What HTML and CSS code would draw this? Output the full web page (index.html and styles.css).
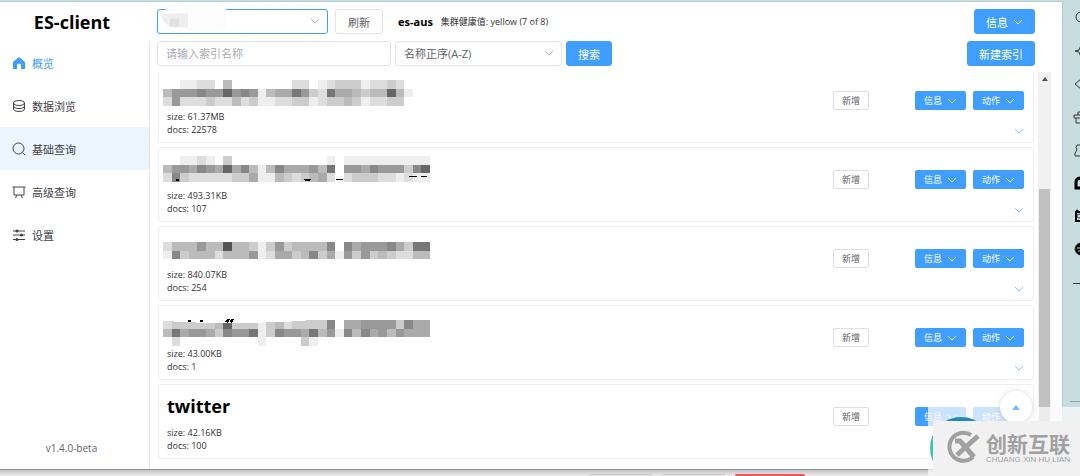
FILE: index.html
```html
<!DOCTYPE html>
<html lang="zh-CN">
<head>
    <meta charset="UTF-8">
    <meta name="viewport" content="width=device-width, initial-scale=1.0">
    <title>ES-client</title>
    <link rel="stylesheet" href="styles.css">
</head>
<body>
    <svg class="defs" aria-hidden="true">
        <symbol id="down" viewBox="0 0 10 10"><path d="M1 3l4 4 4-4"/></symbol>
    </svg>

    <div class="desktop">
        <div class="window">
            <aside class="sidebar">
                <h1 class="brand">ES-client</h1>
                <nav class="menu">
                    <a href="#" class="menu-item active">
                        <svg class="icon" viewBox="0 0 14 14"><path class="solid" d="M7 1L1 6v7h4V9.500a2 2 0 0 1 4 0V13h4V6z"/></svg>
                        概览
                    </a>
                    <a href="#" class="menu-item">
                        <svg class="icon" viewBox="0 0 14 14"><ellipse cx="7" cy="4" rx="5.500" ry="2.500"/><path d="M1.500 4v6c0 1.400 2.400 2.500 5.500 2.500s5.500-1.100 5.500-2.500V4M1.500 7c0 1.400 2.400 2.500 5.500 2.500s5.500-1.100 5.500-2.500"/></svg>
                        数据浏览
                    </a>
                    <a href="#" class="menu-item selected">
                        <svg class="icon" viewBox="0 0 14 14"><circle cx="6.500" cy="6.500" r="5.500"/><path d="M10.500 10.500l2.500 2.500"/></svg>
                        基础查询
                    </a>
                    <a href="#" class="menu-item">
                        <svg class="icon" viewBox="0 0 14 14"><path d="M.5 2h13M2 2v8h10V2M5 10l-1.500 3M9 10l1.500 3"/></svg>
                        高级查询
                    </a>
                    <a href="#" class="menu-item">
                        <svg class="icon" viewBox="0 0 14 14"><path d="M1 3h12M1 7h12M1 11.500h12"/><g class="solid"><circle cx="5" cy="3" r="1.500"/><circle cx="9.500" cy="7" r="1.500"/><circle cx="5" cy="11.500" r="1.500"/></g></svg>
                        设置
                    </a>
                    <div class="version">v1.4.0-beta</div>
                </nav>
            </aside>

            <main class="main">
                <header class="toolbar">
                    <div class="select-wrap focus">
                        <select class="field" aria-label="集群"><option></option></select>
                        <svg class="smudge" viewBox="0 0 70 24" aria-hidden="true"><path fill="#fcfcfc" d="M4 2Q34-3 66 2v18Q40 26 14 21 4 14 4 2z"/><path fill="#eee" d="M0 6h27v14H12Q2 18 0 6z"/><path fill="#e0e0e0" d="M9 11h9v8H9z"/></svg>
                        <svg class="arrow"><use href="#down"/></svg>
                    </div>
                    <button class="btn plain">刷新</button>
                    <div class="cluster"><b>es-aus</b><span>集群健康值: yellow (7 of 8)</span></div>
                    <button class="btn primary push with-arrow">信息<svg class="arrow"><use href="#down"/></svg></button>
                </header>
                <div class="filters">
                    <input class="field search" type="text" placeholder="请输入索引名称" aria-label="索引名称">
                    <div class="select-wrap">
                        <select class="field" aria-label="排序"><option>名称正序(A-Z)</option></select>
                        <svg class="arrow"><use href="#down"/></svg>
                    </div>
                    <button class="btn primary">搜索</button>
                    <button class="btn primary push">新建索引</button>
                </div>

                <div class="content">
                    <div class="list" id="list"></div>
                    <div class="scrollbar">
                        <div class="scroll-up"></div>
                        <div class="scroll-thumb"></div>
                    </div>
                </div>
            </main>
        </div>

        <aside class="dock">
            <svg viewBox="0 0 16 16"><circle cx="8" cy="7" r="5"/><path d="M11 11l4 4"/></svg>
            <svg viewBox="0 0 16 16"><path d="M2 8l4-1 2-5 2 5 4 1-4 1-2 5-2-5z"/></svg>
            <svg viewBox="0 0 16 16"><path d="M2 8l6-5 6 5-6 5z"/></svg>
            <svg viewBox="0 0 16 16"><path d="M1 6h14v3H1zM3 9v5h11M5 6V3h6v3"/></svg>
            <svg viewBox="0 0 16 16"><path d="M4 3h9M4 3q-2 2 0 5-3 3-2 6h11"/></svg>
            <svg viewBox="0 0 16 16"><path class="bold" d="M7 13H3V7q0-4 6-4h5"/></svg>
            <svg viewBox="0 0 16 16"><path class="bold thin" d="M5 2L3 4v9h11M3 4h11"/><circle cx="6" cy="8" r="2"/></svg>
            <svg viewBox="0 0 16 16"><circle class="ink" cx="8" cy="8" r="6"/><path class="cut" d="M4 7h8M5 10h8"/></svg>
            <hr class="dock-line">
            <hr class="dock-line dock-end">
        </aside>
    </div>

    <footer class="taskbar"><span></span><span></span><span class="alert"></span></footer>

    <button class="to-top" aria-label="回到顶部"></button>
    <div class="watermark">
        <div class="watermark-box">
            <svg class="watermark-logo" viewBox="0 0 36 34" aria-hidden="true">
                <path d="M26 5A14 14 0 1 0 28 27" stroke-width="4"/>
                <path d="M10 11h5l14 16M12 25L33 6" stroke-width="5"/>
            </svg>
            <div>
                <div class="watermark-name">创新互联</div>
                <div class="watermark-sub">CHUANG XIN HU LIAN</div>
            </div>
        </div>
    </div>

    <script src="script.js"></script>
</body>
</html>
```
FILE: styles.css
```css
* {
    box-sizing: border-box;
}
body {
    margin: 0;
    height: 100vh;
    display: flex;
    flex-direction: column;
    overflow: hidden;
    background: #c8dde0;
    color: #303133;
    font-family: "Open Sans", "Noto Sans CJK SC", sans-serif;
    font-size: 11px;
}
button, input, select {
    font: inherit;
    color: inherit;
}
svg {
    fill: none;
    stroke: currentColor;
    flex: none;
}
.defs {
    position: absolute;
    width: 0;
    height: 0;
}
.desktop {
    flex: 1;
    min-height: 0;
    display: flex;
    padding-top: 1px;
}
.window {
    flex: 1;
    min-width: 0;
    display: flex;
    background: white;
    border-top: 1px solid #b8cbd0;
    border-right: 1px solid #b4c8cb;
    border-bottom: 1px solid #8b9290;
}

/* Sidebar */
.sidebar {
    width: 150px;
    display: flex;
    flex-direction: column;
}
.brand {
    margin: 0;
    padding: 7px 6px 0 0;
    height: 39px;
    font-size: 18px;
    line-height: 26px;
    color: black;
    text-align: center;
}
.menu {
    flex: 1;
    display: flex;
    flex-direction: column;
    border-right: 1px solid #e6e6e6;
}
.menu-item {
    height: 43px;
    padding-left: 12px;
    display: flex;
    align-items: center;
    gap: 6px;
    color: #404245;
    text-decoration: none;
}
.menu-item.active {
    color: #409eff;
}
.menu-item.selected {
    background: #ecf5ff;
}
.icon {
    width: 14px;
    height: 14px;
}
.solid {
    fill: currentColor;
    stroke: none;
}
.version {
    margin-top: auto;
    padding: 0 6px 13px 0;
    font-size: 10px;
    line-height: 16px;
    color: #606266;
    text-align: center;
}

/* Toolbar and filters */
.main {
    flex: 1;
    min-width: 0;
    display: flex;
    flex-direction: column;
    padding: 7px 11px 10px 7px;
}
.toolbar, .filters {
    display: flex;
    align-items: center;
    height: 25px;
    padding-right: 16px;
}
.toolbar {
    gap: 7px;
    margin-bottom: 7px;
}
.filters {
    gap: 4px;
    margin-bottom: 6px;
}
.field {
    display: block;
    width: 100%;
    height: 25px;
    padding: 0 8px;
    border: 1px solid #e0e3e9;
    border-radius: 3px;
    background: white;
    color: #606266;
    outline: none;
    appearance: none;
}
.field::placeholder {
    color: #a8abb2;
}
.search {
    width: 234px;
}
.select-wrap {
    position: relative;
    width: 167px;
}
.select-wrap.focus {
    width: 171px;
}
.focus .field {
    border-color: #409eff;
}
.select-wrap .arrow {
    position: absolute;
    right: 8px;
    top: 7px;
    color: #b4b7bd;
}
.smudge {
    position: absolute;
    left: 4px;
    top: -2px;
    width: 70px;
    height: 25px;
    stroke: none;
}
.arrow {
    width: 10px;
    height: 10px;
}
.btn {
    height: 25px;
    padding: 0 11px;
    border: 1px solid #dcdfe6;
    border-radius: 3px;
    background: white;
    color: #606266;
    white-space: nowrap;
}
.btn.primary {
    border-color: #409eff;
    background: #409eff;
    color: white;
}
.btn.plain {
    padding: 0 12px;
    border-color: #e0e3e9;
}
.with-arrow {
    display: flex;
    align-items: center;
    gap: 5px;
}
.push {
    margin-left: auto;
}
.cluster {
    display: flex;
    align-items: center;
    gap: 8px;
    padding-left: 8px;
    font-size: 9px;
}
.cluster b {
    font-size: 11px;
    color: black;
}

/* Index list */
.content {
    flex: 1;
    min-height: 0;
    display: flex;
    gap: 4px;
    padding-left: 1px;
}
.list {
    flex: 1;
    min-width: 0;
    display: flex;
    flex-direction: column;
    justify-content: flex-end;
    gap: 4px;
    overflow: hidden;
}
.card {
    flex: none;
    height: 75px;
    display: flex;
    padding: 0 9px 0 8px;
    border: 1px solid #ebeef2;
    border-radius: 3px;
}
.card-info {
    flex: 1;
    font-size: 9px;
    line-height: 13px;
}
.card-title {
    height: 41px;
    margin: 0;
    display: flex;
    align-items: center;
    font-size: 18px;
    line-height: 24px;
    color: black;
}
.mosaic {
    width: 272px;
    height: 41px;
    margin-left: -4px;
    stroke: none;
}
.card-side {
    display: flex;
    flex-direction: column;
    justify-content: space-between;
    align-items: flex-end;
    padding: 22px 0 6px;
}
.card-actions {
    display: flex;
    gap: 7px;
}
.btn.small {
    height: 19px;
    padding: 0 8px;
    border-radius: 2px;
    font-size: 9px;
    line-height: 12px;
}
.btn.add {
    margin-right: 39px;
}
.more {
    display: flex;
    padding: 0;
    border: 0;
    background: none;
    color: #8cc5ff;
}
.scrollbar {
    width: 13px;
    display: flex;
    flex-direction: column;
    background: #f1f1f1;
}
.scroll-up {
    margin: 5px auto 0;
    border: 3px solid transparent;
    border-top-width: 0;
    border-bottom: 4px solid #505050;
}
.scroll-thumb {
    height: 60%;
    margin: auto 1px 38px;
    background: #c1c1c1;
}

/* Desktop around the window */
.dock {
    width: 17px;
    display: flex;
    flex-direction: column;
    gap: 17px;
    padding: 9px 0 0 10px;
    overflow: hidden;
    color: #333;
}
.dock svg {
    width: 16px;
    height: 16px;
}
.dock .bold {
    stroke: black;
    stroke-width: 3;
}
.dock .thin {
    stroke-width: 2;
}
.dock .ink {
    fill: black;
}
.dock .cut {
    stroke: #c8dde0;
}
.dock-line {
    width: 16px;
    margin: 9px 0 0;
    border: 0;
    border-top: 1px solid #333;
}
.dock-line.dock-end {
    margin: 100px 0 0 -3px;
    border-color: #8fa5a8;
}
.taskbar {
    height: 6px;
    display: flex;
    justify-content: center;
    gap: 10px;
    padding: 4px 0 0 314px;
    background: linear-gradient(#c4c4c4, #ececec);
}
.taskbar span {
    width: 63px;
    border-top: 1px solid #c8c8c8;
    border-radius: 2px 2px 0 0;
}
.taskbar .alert {
    width: 70px;
    background: #e85555;
    border-color: #e85555;
}

/* Floating items */
.to-top {
    position: absolute;
    right: 48px;
    bottom: 53px;
    width: 32px;
    height: 32px;
    padding: 0;
    border: 0;
    border-radius: 50%;
    background: white;
    box-shadow: 0 0 5px rgba(0, 0, 0, 0.15);
    z-index: 1;
}
.to-top::before {
    content: "";
    display: block;
    width: 0;
    margin: auto;
    border: 4px solid transparent;
    border-top: 0;
    border-bottom: 5px solid #79bbff;
}
.watermark {
    position: absolute;
    right: 0;
    bottom: 0;
    width: 152px;
    height: 69px;
    padding: 14px 0 0 5px;
    background: rgba(250, 250, 250, 0.75);
}
.watermark::before {
    content: "";
    position: absolute;
    left: 2px;
    top: 10px;
    width: 62px;
    height: 62px;
    border-radius: 50%;
    background: linear-gradient(#2589b5 10%, #3fc1b5 40%);
}
.watermark-box {
    position: relative;
    height: 55px;
    display: flex;
    align-items: center;
    gap: 5px;
    padding: 0 0 4px 12px;
    background: #f1f1f1;
    color: #a0a0a0;
    z-index: 2;
}
.watermark-logo {
    width: 36px;
    height: 34px;
}
.watermark-name {
    font-family: "Noto Sans CJK SC", sans-serif;
    font-size: 21px;
    font-weight: bold;
    line-height: 26px;
}
.watermark-sub {
    font-family: "Liberation Sans", sans-serif;
    font-size: 8px;
    line-height: 8px;
    white-space: nowrap;
}
```
FILE: script.js
```js
// One hex digit per cell is its grey level, a dot leaves the cell empty
const indices = [
    { size: '61.37MB', docs: 22578, top: 11, rows: [
        '..eedd.b.......dd.edccceddcd.',
        'b9998996989ebaa79cd7aabcbb6be',
        'd9dddcddbdceeddccedccbceddcc.'] },
    { size: '493.31KB', docs: 107, top: 8, rows: [
        '..eede.c...........e.eeeeeeeeee',
        'b99a89a6a8beb8aaa9b7.99a8999c86',
        'd8cdddddccaeebcdcbad.dcccddedee'],
      marks: '<path d="M13 31h3v2h-3zM141 31h7l-2 2h-4zM173 31h7v1h-7zM246 28h8v1h-8zM257 28h7v1h-5z"/>' },
    { size: '840.07KB', docs: 254, top: 15, rows: [
        'dbbb9bb5bbcec9cbbbb8.8a9998ac77',
        'e8cbbbdbbb9edaacb8cae9c9cbcddbb'] },
    { size: '43.00KB', docs: 1, top: 14, rows: [
        'dcccccb6cccecbdcccc8.aa9999c8aa',
        'b7a99ac8997ec899a7b9e8b8a9b9aaa',
        '.d.........e....ce'],
      marks: '<path fill="white" d="M0 13h165Q80 20 0 15z"/><path d="M25 14h3v2h-3zM37 14h3v2h-3zM62 16l2-3h3l-2 4zM67 16l1-3h3l-2 4z"/>' },
    { name: 'twitter', size: '42.16KB', docs: 100 }
];

const arrow = '<svg class="arrow"><use href="#down"/></svg>';

function mosaic(item) {
    const cell = 267 / 31;
    let cells = '';
    item.rows.forEach((row, y) => {
        [...row].forEach((c, x) => {
            if (c !== '.') {
                cells += `<rect x="${x * cell}" y="${item.top + y * cell}" width="${cell}" height="${cell}" fill="#${c}${c}${c}"/>`;
            }
        });
    });
    return `<svg class="mosaic" viewBox="0 0 272 41" shape-rendering="crispEdges" aria-hidden="true">${cells}<g fill="black">${item.marks || ''}</g></svg>`;
}

document.getElementById('list').innerHTML = indices.map(item => `
    <section class="card">
        <div class="card-info">
            <h2 class="card-title">${item.name || mosaic(item)}</h2>
            <div>size: ${item.size}</div>
            <div>docs: ${item.docs}</div>
        </div>
        <div class="card-side">
            <div class="card-actions">
                <button class="btn small add">新增</button>
                <button class="btn small primary with-arrow">信息${arrow}</button>
                <button class="btn small primary with-arrow">动作${arrow}</button>
            </div>
            <button class="more" aria-label="展开">${arrow}</button>
        </div>
    </section>`).join('');
```
